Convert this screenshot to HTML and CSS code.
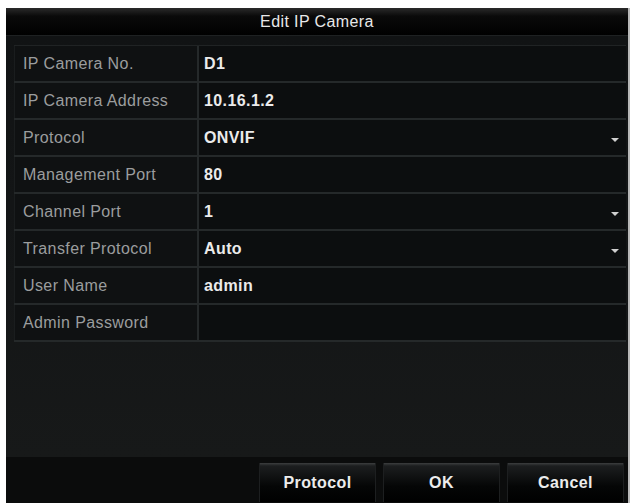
FILE: index.html
```html
<!DOCTYPE html>
<html>
<head>
<meta charset="utf-8">
<link rel="stylesheet" href="styles.css">
</head>
<body>
<div class="dialog">
  <div class="title">Edit IP Camera</div>
  <div class="content">
    <div class="table">
      <div class="row"><div class="label">IP Camera No.</div><div class="value">D1</div></div>
      <div class="row"><div class="label">IP Camera Address</div><div class="value">10.16.1.2</div></div>
      <div class="row"><div class="label">Protocol</div><div class="value">ONVIF<span class="arrow"></span></div></div>
      <div class="row"><div class="label">Management Port</div><div class="value">80</div></div>
      <div class="row"><div class="label">Channel Port</div><div class="value">1<span class="arrow"></span></div></div>
      <div class="row"><div class="label">Transfer Protocol</div><div class="value">Auto<span class="arrow"></span></div></div>
      <div class="row"><div class="label">User Name</div><div class="value">admin</div></div>
      <div class="row"><div class="label">Admin Password</div><div class="value"></div></div>
    </div>
  </div>
  <div class="footer">
    <div class="btn">Protocol</div>
    <div class="btn">OK</div>
    <div class="btn">Cancel</div>
  </div>
</div>
</body>
</html>
```
FILE: styles.css
```css
html, body {
  margin: 0;
  padding: 0;
  background: #ffffff;
}
body {
  font-family: "Liberation Sans", Arial, sans-serif;
  font-size: 16px;
  letter-spacing: 0.4px;
}
.dialog {
  margin: 8px 0 0 6px;
  width: 624px;
  height: 495px;
  background: #151718;
  display: flex;
  flex-direction: column;
  box-sizing: border-box;
  border-right: 2px solid #b8b8b8;
}
.title {
  height: 27px;
  flex: none;
  display: flex;
  align-items: center;
  justify-content: center;
  color: #e8e8e8;
  background: linear-gradient(#2a2a2a 0%, #0a0a0a 30%, #000 100%);
  border-bottom: 1px solid #1e2122;
}
.content {
  flex: 1;
  padding: 9px 2px 0 8px;
  background: linear-gradient(#111314 0%, #141617 60%, #171919 100%);
}
.table {
  border-top: 1px solid #202324;
}
.row {
  display: flex;
  height: 37px;
  border-bottom: 2px solid #25292a;
  box-sizing: border-box;
}
.label {
  width: 174px;
  flex: none;
  padding-left: 8px;
  display: flex;
  align-items: center;
  color: #9b9d9e;
  background: #0f1112;
  border-right: 2px solid #25292a;
  border-left: 1px solid #1a1d1e;
}
.value {
  flex: 1;
  display: flex;
  align-items: center;
  padding-left: 5px;
  padding-right: 8px;
  color: #ebebeb;
  font-weight: bold;
  background: #0c0e0f;
}
.arrow {
  margin-left: auto;
  width: 0;
  height: 0;
  border-left: 4px solid transparent;
  border-right: 4px solid transparent;
  border-top: 4px solid #d0d0d0;
  margin-top: 4px;
  margin-right: -1px;
}
.footer {
  height: 46px;
  flex: none;
  display: flex;
  justify-content: flex-end;
  align-items: flex-start;
  gap: 7px;
  padding: 6px 4px 0 0;
  box-sizing: border-box;
  background: #0b0c0c;
}
.btn {
  width: 117px;
  height: 39px;
  display: flex;
  align-items: center;
  justify-content: center;
  color: #ececec;
  font-weight: bold;
  background: linear-gradient(#3c3e3f 0px, #1c1e1f 3px, #050606 60%, #000 100%);
  border-left: 1px solid #1d1f20;
  border-right: 1px solid #1d1f20;
  box-sizing: border-box;
}
```
